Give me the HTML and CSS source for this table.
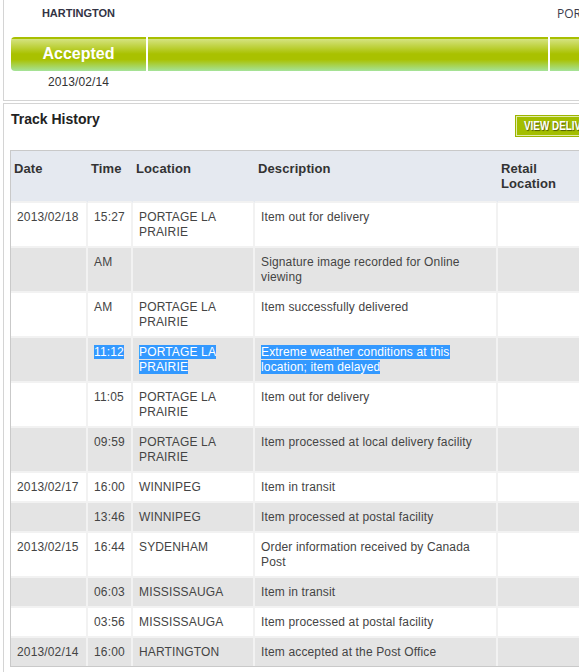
FILE: index.html
```html
<!DOCTYPE html>
<html lang="en">
<head>
<meta charset="utf-8">
<title>Track History</title>
<link rel="stylesheet" href="styles.css">
</head>
<body>
<div class="page">
  <section class="box summary">
    <div class="track-grid labels">
      <div class="stop-label">HARTINGTON</div>
      <div class="stop-label"></div>
      <div class="stop-label alt">PORTAGE LA PRAIRIE</div>
    </div>
    <div class="track-grid progress">
      <div class="seg seg-first">Accepted</div>
      <div class="seg"></div>
      <div class="seg"></div>
    </div>
    <div class="track-grid dates">
      <div class="stop-date">2013/02/14</div>
      <div class="stop-date"></div>
      <div class="stop-date"></div>
    </div>
  </section>

  <section class="box history">
    <div class="history-head">
      <h2 class="history-title">Track History</h2>
      <button class="btn" type="button"><span class="btn-text">VIEW DELIVERY CONFIRMATION</span></button>
    </div>
    <table class="events">
      <colgroup>
        <col class="c-date">
        <col class="c-time">
        <col class="c-loc">
        <col class="c-desc">
        <col class="c-retail">
      </colgroup>
      <thead>
        <tr>
          <th>Date</th>
          <th>Time</th>
          <th>Location</th>
          <th>Description</th>
          <th>Retail Location</th>
        </tr>
      </thead>
      <tbody>
        <tr class="odd"><td>2013/02/18</td><td>15:27</td><td>PORTAGE LA PRAIRIE</td><td>Item out for delivery</td><td></td></tr>
        <tr class="even"><td></td><td>AM</td><td></td><td>Signature image recorded for Online viewing</td><td></td></tr>
        <tr class="odd"><td></td><td>AM</td><td>PORTAGE LA PRAIRIE</td><td>Item successfully delivered</td><td></td></tr>
        <tr class="even"><td></td><td><span class="sel">11:12</span></td><td><span class="sel">PORTAGE LA PRAIRIE</span></td><td><span class="sel">Extreme weather conditions at this location; item delayed</span></td><td></td></tr>
        <tr class="odd"><td></td><td>11:05</td><td>PORTAGE LA PRAIRIE</td><td>Item out for delivery</td><td></td></tr>
        <tr class="even"><td></td><td>09:59</td><td>PORTAGE LA PRAIRIE</td><td>Item processed at local delivery facility</td><td></td></tr>
        <tr class="odd"><td>2013/02/17</td><td>16:00</td><td>WINNIPEG</td><td>Item in transit</td><td></td></tr>
        <tr class="even"><td></td><td>13:46</td><td>WINNIPEG</td><td>Item processed at postal facility</td><td></td></tr>
        <tr class="odd"><td>2013/02/15</td><td>16:44</td><td>SYDENHAM</td><td>Order information received by Canada Post</td><td></td></tr>
        <tr class="even"><td></td><td>06:03</td><td>MISSISSAUGA</td><td>Item in transit</td><td></td></tr>
        <tr class="odd"><td></td><td>03:56</td><td>MISSISSAUGA</td><td>Item processed at postal facility</td><td></td></tr>
        <tr class="even"><td>2013/02/14</td><td>16:00</td><td>HARTINGTON</td><td>Item accepted at the Post Office</td><td></td></tr>
      </tbody>
    </table>
  </section>
</div>
</body>
</html>
```

FILE: styles.css
```css
html, body {
  margin: 0;
  padding: 0;
  background: #ffffff;
  overflow: hidden;
}

body {
  font-family: "Liberation Sans", Arial, sans-serif;
  color: #444444;
}

.page {
  padding-left: 3px;
  width: 900px;
}

.box {
  border: 1px solid #d4d4d4;
  background: #ffffff;
}

/* ---------- summary / progress ---------- */
.summary {
  border-top: none;
  padding: 6px 0 10px 7px;
}

.track-grid {
  display: grid;
  grid-template-columns: 135px 400px 135px 135px;
  column-gap: 2px;
}

.stop-label {
  font-size: 11px;
  line-height: 15px;
  font-weight: bold;
  color: #333344;
  text-align: center;
  white-space: nowrap;
}

.stop-label.alt {
  font-family: "Open Sans", "Liberation Sans", sans-serif;
  font-weight: normal;
  font-size: 12px;
  color: #3b3b4b;
  text-align: left;
  padding-left: 7px;
}

.progress {
  margin-top: 16px;
  height: 34px;
}

.seg {
  height: 34px;
  background: linear-gradient(to bottom,
    #a8bf00 0px, #a8bf00 2px,
    #d5e380 2px,
    #a9c100 50%,
    #a9c100 66%,
    #a5e39a 100%);
}

.seg-first {
  border-radius: 4px 0 0 4px;
  color: #ffffff;
  font-weight: bold;
  font-size: 16px;
  line-height: 34px;
  text-align: center;
}

.dates {
  margin-top: 4px;
}

.stop-date {
  font-size: 12px;
  line-height: 15px;
  color: #333;
  text-align: center;
  letter-spacing: 0.1px;
}

/* ---------- history ---------- */
.history {
  margin-top: 2px;
  padding: 7px 0 30px 6px;
}

.history-head {
  display: flex;
  align-items: flex-start;
  margin-bottom: 13px;
}

.history-title {
  margin: 0;
  padding-left: 1px;
  width: 504px;
  font-size: 14px;
  line-height: 17px;
  font-weight: bold;
  color: #222;
}

.btn {
  margin-top: 4px;
  height: 22px;
  padding: 0 0 0 8px;
  border: 1px solid #9cb500;
  box-shadow: inset 0 0 0 1px #e2ebaa;
  background: #a3be00;
  color: #ffffff;
  font-family: "Liberation Sans", Arial, sans-serif;
  font-weight: bold;
  font-size: 13px;
  line-height: 20px;
  text-shadow: 1px 1px 1px #4f5d00;
  white-space: nowrap;
  overflow: hidden;
  width: 200px;
  text-align: left;
}

.btn-text {
  display: inline-block;
  transform: scaleX(0.76);
  transform-origin: left center;
}

.events {
  border: 1px solid #c9c9c9;
  border-spacing: 0;
  table-layout: fixed;
  width: 589px;
  font-size: 12px;
  line-height: 15px;
  letter-spacing: 0.15px;
}

.c-date { width: 77px; }
.c-time { width: 45px; }
.c-loc { width: 122px; }
.c-desc { width: 243px; }
.c-retail { width: 100px; }

.events th {
  height: 40px;
  padding: 10px 2px 0 3px;
  background: #e5e9f0;
  border-right: 2px solid #e5e9f0;
  border-bottom: 2px solid #f2f2f2;
  text-align: left;
  vertical-align: top;
  font-size: 13px;
  line-height: 15px;
  font-weight: bold;
  letter-spacing: 0.1px;
  color: #333333;
}

.events td {
  padding: 7px 6px 6px 6px;
  border-right: 2px solid #f2f2f2;
  border-bottom: 2px solid #f2f2f2;
  vertical-align: top;
  color: #444444;
}

.events tr.odd td {
  background: #ffffff;
}

.events tr.even td {
  background: #e4e4e4;
}

.events tbody tr:last-child td {
  border-bottom: none;
}

.sel {
  background: #3399ff;
  color: #ffffff;
}
```
